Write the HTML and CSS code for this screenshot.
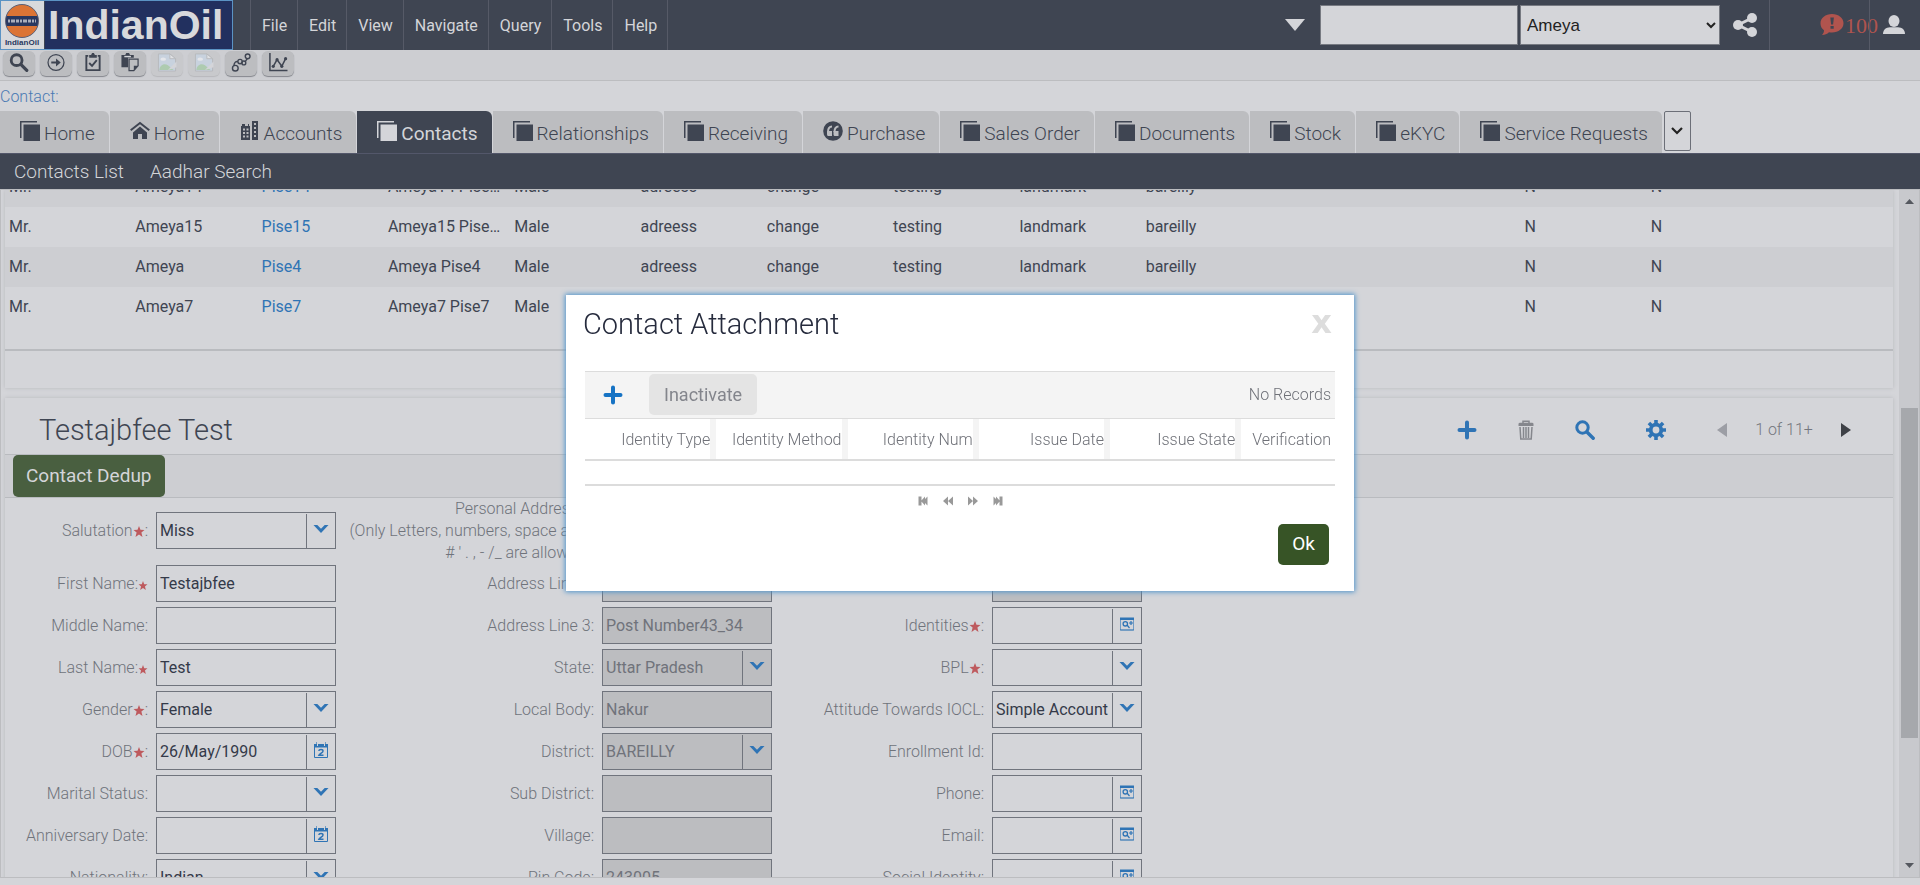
FILE: index.html
```html
<!DOCTYPE html>
<html lang="en">
<head>
<meta charset="utf-8">
<title>Contacts</title>
<link rel="stylesheet" href="styles.css">
</head>
<body>
<svg class="defs" aria-hidden="true">
  <symbol id="sheet" viewBox="0 0 20 20"><path fill="currentColor" d="M0 0h17v1.500H1.500V17H0zM3.500 3.500H20V20H3.500z"/></symbol>
  <symbol id="home" viewBox="0 0 20 20"><path fill="currentColor" d="M10 5.500l7 6V18h-5v-5H8v5H3v-6.500z"/><path fill="none" stroke="currentColor" stroke-width="2" d="M.7 9.200L10 2l9.300 7.200"/></symbol>
  <symbol id="accounts" viewBox="0 0 20 20"><path fill="currentColor" fill-rule="evenodd" d="M1 5h1V3h3v2h3V3h1v2h1v14H1zM3 7.500v2h2v-2zm3.500 0v2h2v-2zM3 11v2h2v-2zm3.500 0v2h2v-2zM3 14.500v2h2v-2zm3.500 0v2h2v-2zM12 0h6v19h-6zM14 2v2h2V2zm0 4v2h2V6zm0 4v2h2v-2zm0 4v2h2v-2z"/></symbol>
  <symbol id="quote" viewBox="0 0 20 20"><circle cx="10" cy="10" r="9.800" fill="currentColor"/><path fill="none" stroke="#bcbdc0" stroke-width="2" d="M9 5.500C6 5.500 5 7.500 5 11M15.500 5.500c-3 0-4 2-4 5.500"/><path fill="#bcbdc0" d="M4 10h5v5H5.500C4.500 15 4 14.500 4 13zM10.500 10h5v5H12c-1 0-1.500-.5-1.500-2z"/></symbol>
  <symbol id="search" viewBox="0 0 20 20"><circle cx="7.500" cy="7.500" r="5.700" fill="none" stroke="currentColor" stroke-width="3"/><path stroke="currentColor" stroke-width="3.400" stroke-linecap="round" d="M12.200 12.200l6 6"/></symbol>
  <symbol id="go" viewBox="0 0 20 20"><circle cx="10" cy="10" r="8.400" fill="none" stroke="currentColor" stroke-width="1.300"/><path fill="currentColor" d="M5 9h5V5.800l5 4.200-5 4.200V11H5z"/></symbol>
  <symbol id="check" viewBox="0 0 20 20"><path fill="none" stroke="currentColor" stroke-width="2" d="M5 3H3v15h14V3h-2M6 10.500l3 3 5-6"/><path fill="currentColor" d="M6 2h2l1-2h2l1 2h2v3H6z"/></symbol>
  <symbol id="paste" viewBox="0 0 20 20"><path fill="currentColor" d="M1 2h4l1-2h3l1 2h4v3H8v10H1z"/><path fill="#d4d5d9" d="M4 3h7v1.500H4z"/><path fill="#bcbdc0" stroke="currentColor" stroke-width="1.300" d="M9 6.500h9.500v7L14 18.500H9z"/><path fill="currentColor" d="M18.500 13.500H14v5z"/></symbol>
  <symbol id="missing" viewBox="0 0 20 20"><path fill="#c8d2de" stroke="#b7b9bd" d="M1 1h12l6 5v13H1z"/><path fill="#aecbb0" d="M2 18c0-5 5-8 9-5l6 5z"/><ellipse cx="6" cy="6.500" rx="3" ry="1.700" fill="#e4e6ea"/><path fill="#d4d5d9" d="M20 9l-9 9 9-3z"/><path fill="#e0e1e4" stroke="#b7b9bd" d="M13 1v5h6z"/></symbol>
  <symbol id="flow" viewBox="0 0 20 20"><g fill="none" stroke="currentColor" stroke-width="1.500"><circle cx="4" cy="16" r="3"/><circle cx="9" cy="9" r="2.300"/><circle cx="13" cy="10.500" r="2"/><circle cx="17" cy="3.500" r="2.500"/><path d="M2.500 13.500Q3 8.500 6.700 9M14.500 9l2-3"/></g></symbol>
  <symbol id="chart" viewBox="0 0 20 20"><path fill="none" stroke="currentColor" stroke-width="1.600" d="M1.500 0v18.500H20M5 14l4-7 5 7 4-8"/><g fill="currentColor"><circle cx="5" cy="14" r="1.700"/><circle cx="9" cy="7" r="1.700"/><circle cx="14" cy="14" r="1.700"/><circle cx="18" cy="6" r="1.700"/></g></symbol>
  <symbol id="plus" viewBox="0 0 20 20"><path fill="none" stroke="currentColor" stroke-width="4" stroke-linecap="round" d="M10 2.500v15M2.500 10h15"/></symbol>
  <symbol id="trash" viewBox="0 0 20 20"><g fill="none" stroke="currentColor" stroke-width="1.500"><path d="M7 3V1.200h6V3M4 7l.8 12h10.400L16 7"/><path d="M7.500 7v11M10 7v11M12.500 7v11"/></g><path fill="currentColor" d="M2.500 4q0-1.300 1.500-1.300h12q1.500 0 1.500 1.300v2h-15z"/></symbol>
  <symbol id="gear" viewBox="0 0 20 20"><circle cx="10" cy="10" r="5.300" fill="none" stroke="currentColor" stroke-width="3.800"/><path stroke="currentColor" stroke-width="3.600" d="M10 0v4M10 16v4M0 10h4M16 10h4M2.900 2.900l2.800 2.800M14.300 14.300l2.800 2.800M2.900 17.100l2.800-2.800M14.300 5.700l2.800-2.800"/></symbol>
  <symbol id="chev" viewBox="0 0 16 16"><path fill="currentColor" d="M.5 4h3.800L8 7.800 11.700 4h3.800L8 12z"/></symbol>
  <symbol id="cal" viewBox="0 0 16 16"><path fill="none" stroke="currentColor" d="M1.500 3.500h13v12h-13z"/><path fill="currentColor" d="M1 2h14v3.500H1z"/><path stroke="#d4d5d9" d="M4.500 0v4M11.500 0v4"/><path stroke="currentColor" opacity=".6" d="M3.500 0v3M12.500 0v3"/><path fill="none" stroke="currentColor" stroke-width="1.500" d="M5.800 9q.2-1.500 2.200-1.500t2 1.500q0 1-1.800 2.200T6 13.200h4.500"/></symbol>
  <symbol id="pick" viewBox="0 0 16 16"><path fill="none" stroke="currentColor" opacity=".6" d="M1.500 2v12h13V2"/><path stroke="currentColor" opacity=".4" stroke-width="2" d="M1 14h14"/><path fill="currentColor" d="M1 1.500h14V4H1z"/><circle cx="6.300" cy="7.800" r="2.200" fill="none" stroke="currentColor" stroke-width="1.300"/><path fill="none" stroke="currentColor" stroke-width="1.200" d="M8 9l2.500 3M10 7h4M12 5v4"/></symbol>
  <symbol id="star" viewBox="0 0 12 12"><path fill="currentColor" d="M6 0l1.600 4.200L12 4.400 8.600 7.200 9.800 12 6 9.200 2.200 12l1.200-4.800L0 4.400l4.400-.2z"/></symbol>
  <symbol id="tri" viewBox="0 0 10 14"><path fill="currentColor" d="M0 0l10 7-10 7z"/></symbol>
  <symbol id="last" viewBox="0 0 10 10"><path fill="currentColor" d="M.5 .5l2.500 2.500V.5l4 4.500-4 4.500V7L.5 9.500zM6.500 .5h3v9h-3z"/></symbol>
  <symbol id="next" viewBox="0 0 10 10"><path fill="currentColor" d="M0 .5l5 4.500-5 4.500zM5 .5l5 4.500-5 4.500z"/></symbol>
</svg>

<header class="topbar">
  <a class="logo" href="#" aria-label="IndianOil home">
    <svg viewBox="0 0 231 48"><path fill="#d8d9dc" d="M0 0h43v48H0z"/><path fill="#22305f" d="M44 0h187v48H44z"/>
      <circle cx="21" cy="20" r="16.500" fill="#dc7435"/><path fill="#29375f" d="M5 15h32v10H5z"/><path fill="none" stroke="#5a6078" d="M4.500 20a16.500 16.500 0 0 1 33 0a16.500 16.500 0 0 1-33 0"/>
      <path stroke="#a9aebc" stroke-width="3" stroke-dasharray="2 1 4 1 3 1" d="M7 20h28"/>
      <text x="21" y="44" text-anchor="middle" class="logo-small">IndianOil</text>
      <text x="47" y="38" class="logo-big">IndianOil</text></svg>
  </a>
  <nav class="menu"><button>File</button><button>Edit</button><button>View</button><button>Navigate</button><button>Query</button><button>Tools</button><button>Help</button></nav>
  <div class="tools">
    <svg class="drop" viewBox="0 0 20 12"><path fill="currentColor" d="M0 0h20L10 12z"/></svg>
    <input class="find" aria-label="Search text">
    <select class="who" aria-label="Saved query"><option>Ameya</option></select>
    <button class="cell share" aria-label="Share"><svg viewBox="0 0 24 24"><path fill="none" stroke="currentColor" stroke-width="3" d="M19 5L5 12l14 7"/><g fill="currentColor"><circle cx="5" cy="12" r="5"/><circle cx="19" cy="5" r="5"/><circle cx="19" cy="19" r="5"/></g></svg></button>
    <button class="cell alert" aria-label="100 notifications"><svg viewBox="0 0 24 22"><path fill="currentColor" d="M12 0c6.500 0 11.500 4 11.500 9.200S18.500 18.500 12 18.500c-1 0-2-.1-3-.3C7 20 5 21 2 21c1.500-1.500 2-3 2-4.700C1.500 14.500.5 12 .5 9.200.5 4 5.500 0 12 0z"/><path fill="#3f4552" d="M10.300 3.500h3.600l-.8 7h-2zM10.500 12h3.200v2.800h-3.200z"/></svg>100</button>
    <button class="cell user" aria-label="Account"><svg viewBox="0 0 22 20"><ellipse cx="11" cy="6" rx="5.500" ry="6" fill="currentColor"/><path fill="currentColor" d="M0 19c0-4.500 3-6.500 7-6.800h8c4 .3 7 2.300 7 6.800z"/></svg></button>
  </div>
</header>

<div class="toolbar">
  <button aria-label="Search"><svg><use href="#search"/></svg></button>
  <button aria-label="Go"><svg><use href="#go"/></svg></button>
  <button aria-label="Tasks"><svg><use href="#check"/></svg></button>
  <button aria-label="Paste"><svg><use href="#paste"/></svg></button>
  <button aria-label="Image" disabled><svg><use href="#missing"/></svg></button>
  <button aria-label="Image" disabled><svg><use href="#missing"/></svg></button>
  <button aria-label="Flow"><svg><use href="#flow"/></svg></button>
  <button aria-label="Chart"><svg><use href="#chart"/></svg></button>
</div>
<div class="crumb"><a href="#">Contact:</a></div>

<nav class="tabs">
  <a href="#"><svg><use href="#sheet"/></svg>Home</a>
  <a href="#"><svg><use href="#home"/></svg>Home</a>
  <a href="#"><svg><use href="#accounts"/></svg>Accounts</a>
  <a href="#" class="on"><svg><use href="#sheet"/></svg>Contacts</a>
  <a href="#"><svg><use href="#sheet"/></svg>Relationships</a>
  <a href="#"><svg><use href="#sheet"/></svg>Receiving</a>
  <a href="#"><svg><use href="#quote"/></svg>Purchase</a>
  <a href="#"><svg><use href="#sheet"/></svg>Sales Order</a>
  <a href="#"><svg><use href="#sheet"/></svg>Documents</a>
  <a href="#"><svg><use href="#sheet"/></svg>Stock</a>
  <a href="#"><svg><use href="#sheet"/></svg>eKYC</a>
  <a href="#"><svg><use href="#sheet"/></svg>Service Requests</a>
  <button class="more" aria-label="More tabs"><svg viewBox="0 0 12 8"><path fill="none" stroke="currentColor" stroke-width="2.200" d="M1 1l5 5 5-5"/></svg></button>
</nav>
<nav class="subnav"><a href="#">Contacts List</a><a href="#">Aadhar Search</a></nav>

<main class="view">
  <div class="pane">
    <section class="panel list">
      <table class="rows">
        <colgroup><col span="14" class="c"><col></colgroup>
        <tbody>
        <tr class="alt"><td>Mr.</td><td>Ameya14</td><td><a href="#">Pise14</a></td><td>Ameya14 Pise14</td><td>Male</td><td>adreess</td><td>change</td><td>testing</td><td>landmark</td><td>bareilly</td><td></td><td></td><td>N</td><td>N</td><td></td></tr>
        <tr><td>Mr.</td><td>Ameya15</td><td><a href="#">Pise15</a></td><td>Ameya15 Pise15</td><td>Male</td><td>adreess</td><td>change</td><td>testing</td><td>landmark</td><td>bareilly</td><td></td><td></td><td>N</td><td>N</td><td></td></tr>
        <tr class="alt"><td>Mr.</td><td>Ameya</td><td><a href="#">Pise4</a></td><td>Ameya Pise4</td><td>Male</td><td>adreess</td><td>change</td><td>testing</td><td>landmark</td><td>bareilly</td><td></td><td></td><td>N</td><td>N</td><td></td></tr>
        <tr><td>Mr.</td><td>Ameya7</td><td><a href="#">Pise7</a></td><td>Ameya7 Pise7</td><td>Male</td><td></td><td></td><td></td><td></td><td></td><td></td><td></td><td>N</td><td>N</td><td></td></tr>
        </tbody>
      </table>
      <div class="list-foot"></div>
    </section>

    <section class="panel detail">
      <div class="head">
        <h1>Testajbfee Test</h1>
        <button class="ic" aria-label="New"><svg><use href="#plus"/></svg></button>
        <button class="ic dim" aria-label="Delete"><svg><use href="#trash"/></svg></button>
        <button class="ic" aria-label="Query"><svg><use href="#search"/></svg></button>
        <button class="ic gear" aria-label="Settings"><svg><use href="#gear"/></svg></button>
        <div class="pos">
          <button class="prev" aria-label="Previous"><svg><use href="#tri"/></svg></button>
          <span>1 of 11+</span>
          <button class="nxt" aria-label="Next"><svg><use href="#tri"/></svg></button>
        </div>
      </div>
      <div class="band"><button class="btn">Contact Dedup</button></div>
      <form class="form">
        <label for="sal">Salutation<svg><use href="#star"/></svg>:</label>
        <div class="field"><select id="sal"><option>Miss</option></select><span class="mark"><svg><use href="#chev"/></svg></span></div>
        <label for="ad1">Personal Address 1:<br>(Only Letters, numbers, space and :<br># ' . , - /_ are allowed):</label>
        <div class="field off"><input id="ad1" disabled></div>
        <span></span><div class="field off"><input aria-label="Contact code" disabled></div>

        <label for="fn">First Name:<svg class="sm"><use href="#star"/></svg></label>
        <div class="field"><input id="fn" value="Testajbfee"></div>
        <label for="ad2">Address Line 2:</label>
        <div class="field off"><input id="ad2" value="Street Number43_3" disabled></div>
        <span></span><div class="field off"><input aria-label="Contact status" disabled></div>

        <label for="mn">Middle Name:</label>
        <div class="field"><input id="mn"></div>
        <label for="ad3">Address Line 3:</label>
        <div class="field off"><input id="ad3" value="Post Number43_34" disabled></div>
        <label for="idn">Identities<svg><use href="#star"/></svg>:</label>
        <div class="field"><input id="idn"><button type="button" class="mark" aria-label="Pick identities"><svg><use href="#pick"/></svg></button></div>

        <label for="ln">Last Name:<svg class="sm"><use href="#star"/></svg></label>
        <div class="field"><input id="ln" value="Test"></div>
        <label for="st">State:</label>
        <div class="field off"><select id="st" disabled><option>Uttar Pradesh</option></select><span class="mark"><svg><use href="#chev"/></svg></span></div>
        <label for="bpl">BPL<svg><use href="#star"/></svg>:</label>
        <div class="field"><select id="bpl"><option></option></select><span class="mark"><svg><use href="#chev"/></svg></span></div>

        <label for="gen">Gender<svg><use href="#star"/></svg>:</label>
        <div class="field"><select id="gen"><option>Female</option></select><span class="mark"><svg><use href="#chev"/></svg></span></div>
        <label for="lb">Local Body:</label>
        <div class="field off"><input id="lb" value="Nakur" disabled></div>
        <label for="att">Attitude Towards IOCL:</label>
        <div class="field"><select id="att"><option>Simple Account</option></select><span class="mark"><svg><use href="#chev"/></svg></span></div>

        <label for="dob">DOB<svg><use href="#star"/></svg>:</label>
        <div class="field"><input id="dob" value="26/May/1990"><button type="button" class="mark" aria-label="Pick date of birth"><svg><use href="#cal"/></svg></button></div>
        <label for="dis">District:</label>
        <div class="field off"><select id="dis" disabled><option>BAREILLY</option></select><span class="mark"><svg><use href="#chev"/></svg></span></div>
        <label for="enr">Enrollment Id:</label>
        <div class="field"><input id="enr"></div>

        <label for="mar">Marital Status:</label>
        <div class="field"><select id="mar"><option></option></select><span class="mark"><svg><use href="#chev"/></svg></span></div>
        <label for="sub">Sub District:</label>
        <div class="field off"><input id="sub" disabled></div>
        <label for="ph">Phone:</label>
        <div class="field"><input id="ph"><button type="button" class="mark" aria-label="Pick phone"><svg><use href="#pick"/></svg></button></div>

        <label for="ann">Anniversary Date:</label>
        <div class="field"><input id="ann"><button type="button" class="mark" aria-label="Pick anniversary date"><svg><use href="#cal"/></svg></button></div>
        <label for="vil">Village:</label>
        <div class="field off"><input id="vil" disabled></div>
        <label for="em">Email:</label>
        <div class="field"><input id="em"><button type="button" class="mark" aria-label="Pick email"><svg><use href="#pick"/></svg></button></div>

        <label for="nat">Nationality:</label>
        <div class="field"><select id="nat"><option>Indian</option></select><span class="mark"><svg><use href="#chev"/></svg></span></div>
        <label for="pin">Pin Code:</label>
        <div class="field off"><input id="pin" value="243005" disabled></div>
        <label for="soc">Social Identity:</label>
        <div class="field"><input id="soc"><button type="button" class="mark" aria-label="Pick social identity"><svg><use href="#pick"/></svg></button></div>
      </form>
    </section>
  </div>
  <div class="scroll"><svg viewBox="0 0 9 5"><path d="M4.500 0L9 5H0z"/></svg><div class="track"><div class="thumb"></div></div><svg viewBox="0 0 9 5"><path d="M0 0h9L4.500 5z"/></svg></div>
</main>

<div class="overlay">
  <div class="modal" role="dialog" aria-labelledby="mt">
    <div class="modal-head"><h2 id="mt">Contact Attachment</h2><button class="close" aria-label="Close">x</button></div>
    <div class="modal-body">
      <div class="modal-bar">
        <button class="ic" aria-label="Add"><svg><use href="#plus"/></svg></button>
        <button class="inactive" disabled>Inactivate</button>
        <span class="count">No Records</span>
      </div>
      <table class="ids">
        <colgroup><col span="5" class="c"><col></colgroup>
        <thead><tr><th>Identity Type</th><th>Identity Method</th><th>Identity Num</th><th>Issue Date</th><th>Issue State</th><th>Verification</th></tr></thead>
      </table>
      <div class="pager">
        <button aria-label="First page"><svg class="flip"><use href="#last"/></svg></button>
        <button aria-label="Previous page"><svg class="flip"><use href="#next"/></svg></button>
        <button aria-label="Next page"><svg><use href="#next"/></svg></button>
        <button aria-label="Last page"><svg><use href="#last"/></svg></button>
      </div>
      <div class="actions"><button class="ok">Ok</button></div>
    </div>
  </div>
</div>
</body>
</html>
```
FILE: styles.css
```css
* { box-sizing: border-box; }
body {
  margin: 0;
  height: 100vh;
  display: flex;
  flex-direction: column;
  overflow: hidden;
  background: #d4d5d9;
  color: #3f4552;
  font: 300 16px/22px Roboto, sans-serif;
}
button, input, select { font: inherit; color: inherit; border: 0; padding: 0; margin: 0; background: none; border-radius: 0; }
a { color: inherit; text-decoration: none; }
svg { display: block; flex: none; }
.defs { position: absolute; width: 0; height: 0; }

.topbar { display: flex; flex: none; height: 50px; background: #3f4552; color: #d4d5d9; }
.logo { border: 1px solid #5b93c4; width: 233px; }
.logo svg { width: 231px; height: 48px; }
.logo-big { font: 700 41px "Liberation Sans", sans-serif; fill: #d8d9dc; }
.logo-small { font: 700 8px "Liberation Sans", sans-serif; fill: #29375f; }
.menu { display: flex; margin-left: 17px; border-left: 1px solid #565a67; }
.menu button { padding: 2px 10px 0 11px; border-right: 1px solid #565a67; font-weight: 400; }
.tools { display: flex; margin-left: auto; align-items: center; }
.drop { width: 20px; height: 12px; margin-right: 15px; }
.find, .who { height: 40px; background: #d4d5d9; border: 1px solid #777a82; color: #222; font-weight: 400; }
.find { width: 198px; margin-right: 2px; }
.who { width: 200px; padding-left: 2px; font-family: "Liberation Sans", sans-serif; font-size: 17px; }
.cell { display: flex; align-items: center; height: 50px; }
.cell + .cell, .user { border-left: 1px solid #565a67; }
.share { width: 49px; padding-left: 13px; }
.share svg { width: 24px; height: 24px; }
.alert { width: 100px; padding: 2px 0 0 50px; white-space: nowrap; gap: 1px; color: #b0544e; font: 400 22px "Liberation Serif", serif; }
.alert svg { width: 24px; height: 22px; margin-bottom: 3px; }
.user { width: 51px; padding-left: 13px; }
.user svg { width: 22px; height: 20px; }

.toolbar { display: flex; flex: none; gap: 5px; height: 31px; padding: 1px 3px; background: #cdced2; border-bottom: 1px solid #bcbdc0; }
.toolbar button { display: flex; justify-content: center; padding-top: 2px; width: 32px; height: 25px; background: #bcbdc0; border-radius: 6px; box-shadow: 0 1px 1px #85878d; }
.toolbar button:disabled { background: #c8c9cc; box-shadow: 0 1px 1px #b8b9bc; }
.toolbar svg { width: 20px; height: 19px; }
.crumb { flex: none; height: 30px; padding-top: 5px; color: #4a79b3; }

.tabs { display: flex; flex: none; gap: 1px; height: 42px; font-size: 19px; }
.tabs a { display: flex; align-items: center; gap: 4px; padding: 4px 14px 0 20px; background: #bcbdc0; border-top-right-radius: 6px; white-space: nowrap; }
.tabs a svg { width: 20px; height: 20px; margin-bottom: 6px; }
.tabs .on { background: #3f4552; color: #d4d5d9; font-weight: 400; }
.more { display: flex; align-items: center; justify-content: center; width: 27px; height: 40px; margin-left: 1px; border: 1px solid #6c6f78; border-radius: 2px; color: #222; }
.more svg { width: 12px; height: 8px; }
.subnav { display: flex; flex: none; align-items: center; gap: 26px; height: 37px; padding-left: 14px; background: #3f4552; color: #d4d5d9; border-top: 1px solid #53576a; border-bottom: 1px solid #bcbdc0; font-size: 19px; }

.view { display: flex; flex: 1; min-height: 0; margin-bottom: 7px; border: solid #bcbdc0; border-width: 0 1px 1px; }
.pane { flex: 1; min-width: 0; overflow: hidden; padding: 0 6px 0 4px; }
.panel { box-shadow: 0 0 4px #b9babd; background: #d4d5d9; }
.list { display: flex; flex-direction: column; justify-content: flex-end; height: 198px; overflow: hidden; }
.rows { width: 100%; table-layout: fixed; border-collapse: collapse; font-weight: 400; }
.rows .c { width: 6.69%; }
.rows td { height: 40px; padding: 0 8px 0 4px; overflow: hidden; text-overflow: ellipsis; white-space: nowrap; }
.rows a { color: #2f74b5; }
.alt { background: #cdced2; }
.list-foot { flex: none; height: 39px; margin-top: 22px; border-top: 2px solid #b9bbbf; }

.detail { margin-top: 10px; }
.head { display: flex; align-items: center; height: 57px; padding: 8px 42px 0 34px; border-bottom: 1px solid #b9bbbf; }
h1, h2 { margin: 0; font-weight: 300; font-size: 29px; line-height: 34px; }
h1 { flex: 1; }
.ic { color: #2f74b5; width: 20px; }
.ic svg { width: 20px; height: 20px; }
.head .ic { margin-right: 39px; }
.head .dim { color: #85878d; }
.head .gear { margin: 0 51px 0 12px; }
.pos { display: flex; align-items: center; justify-content: space-between; width: 134px; color: #74777e; }
.pos svg { width: 10px; height: 14px; }
.prev { color: #9c9ea5; transform: scaleX(-1); }
.nxt { color: #3e4147; }
.band { height: 43px; padding-left: 8px; background: #cdced2; border-bottom: 1px solid #b9bbbf; }
.btn { height: 42px; padding: 0 13px; background: #495f40; color: #d4d5d9; border-radius: 5px; font-size: 19px; font-weight: 400; }

.form { display: grid; grid-template-columns: 151px 180px 266px 170px 220px 150px; grid-template-rows: 64px; grid-auto-rows: 42px; align-items: center; }
.form label { padding: 2px 8px 0 0; text-align: right; color: #6f737b; }
.form label svg { display: inline-block; width: 12px; height: 11px; color: #be5a5e; vertical-align: -1px; }
.form label .sm { width: 10px; height: 9px; }
.field { display: flex; height: 37px; border: 1px solid #70747d; padding-top: 1px; color: #343a49; font-weight: 400; }
.field input, .field select { flex: 1; min-width: 0; padding-left: 3px; appearance: none; outline: 0; opacity: 1; }
.field.off { background: #bcbdc0; color: #70737b; }
.mark { display: flex; align-items: center; justify-content: center; width: 29px; padding-bottom: 3px; border-left: 1px solid #70747d; color: #2f74b5; }
.mark svg { width: 16px; height: 16px; }

.scroll { display: flex; flex-direction: column; align-items: center; width: 20px; padding: 9px 1px 9px 2px; background: #c8c9cd; }
.scroll svg { width: 9px; height: 5px; fill: #55585f; }
.track { flex: 1; width: 100%; display: grid; grid-template-rows: 204fr 329fr 125fr; }
.thumb { grid-row: 2; background: #a6a8ac; }

.overlay { position: fixed; inset: 0; display: flex; align-items: center; justify-content: center; }
.modal { width: 788px; padding: 12px 0 26px; background: #fff; box-shadow: 0 0 5px 1px #4f94cc; }
.modal-head { display: flex; justify-content: space-between; height: 64px; padding: 0 22px 0 17px; color: #262b3d; }
.modal-body { padding: 0 19px; }
.close { height: 30px; color: #ddd; font: 700 32px/24px "DejaVu Sans", sans-serif; }
.modal-bar { display: flex; align-items: center; height: 48px; padding: 0 4px 0 18px; background: #f4f4f4; border: solid #dcdcdc; border-width: 1px 0; color: #6f7178; }
.modal-bar .ic { color: #1673c4; }
.inactive { height: 41px; margin-left: 26px; padding: 0 15px; background: #e4e4e4; border-radius: 5px; color: #83858c; font-size: 18px; font-weight: 400; }
.count { margin-left: auto; }
.ids { width: 100%; table-layout: fixed; border-collapse: separate; border-spacing: 0; border-bottom: 2px solid #dcdcdc; }
.ids .c { width: 17.5%; }
.ids th { height: 40px; padding: 2px 0 0; border-right: 6px solid #f4f4f4; font-weight: 300; text-align: right; color: #6f7178; }
.ids th:last-child { padding-right: 4px; border: 0; }
.pager { display: flex; justify-content: center; gap: 15px; margin-top: 23px; padding-top: 10px; border-top: 2px solid #dcdcdc; color: #999; }
.pager svg { width: 10px; height: 10px; }
.flip { transform: scaleX(-1); }
.actions { display: flex; justify-content: flex-end; padding: 18px 6px 0; }
.ok { height: 41px; padding: 0 14px; background: #375426; color: #fff; border-radius: 5px; font-size: 19px; font-weight: 400; }
```
